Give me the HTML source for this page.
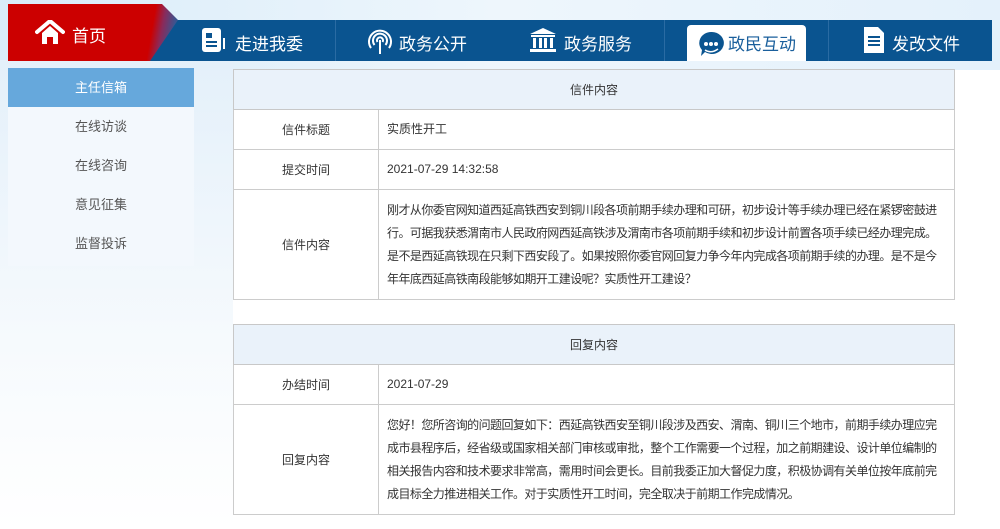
<!DOCTYPE html>
<html><head><meta charset="utf-8"><style>
*{margin:0;padding:0;box-sizing:border-box}
body{width:1000px;height:529px;overflow:hidden;background:#fff;font-family:"Liberation Sans","Noto Sans CJK SC",sans-serif;position:relative}
.topbg{position:absolute;left:0;top:0;width:1000px;height:70px;background:linear-gradient(90deg,#d9ecf9,#eef6fc 50%,#e4f1fb)}
.leftbg{position:absolute;left:0;top:60px;width:233px;height:469px;background:linear-gradient(180deg,#e4f0fa,#f6fafd 60%,#fff)}
.nav{position:absolute;left:8px;top:20px;width:984px;height:41px;background:#0a5490}
.home{position:absolute;left:8px;top:4px;width:170px;height:57px;background:linear-gradient(100deg,#cc0000 0,#cc0000 146px,#8a2a5a 156px,#3a5590 168px);clip-path:polygon(0 0,154px 0,170px 16px,142px 57px,0 57px)}
.nt{position:absolute;color:#fff;font-size:17px;top:30px}
.div{position:absolute;top:20px;width:1px;height:41px;background:#2a6ba3}
.act{position:absolute;left:687px;top:25px;width:119px;height:36px;background:#fff;border-radius:4px 4px 0 0}
.side{position:absolute;left:8px;top:68px;width:186px;height:198px;background:#f3f8fd}
.si{height:39px;line-height:39px;text-align:center;font-size:13px;color:#555}
.si.a{background:#66a8dc;color:#fff}
table{position:absolute;left:233px;width:722px;border-collapse:collapse;font-size:12px;color:#333;table-layout:fixed}
td{border:1px solid #ccc;vertical-align:middle}
td.h{height:40px;background:#eaf2fa;text-align:center;color:#333;border-color:#c8c8c8}
td.l{text-align:center;height:40px}
td.v{padding:0 8px;line-height:23px}
td.t{white-space:nowrap;letter-spacing:-0.55px}
</style></head><body>
<div class="topbg"></div>
<div class="leftbg"></div>
<div class="nav"></div>
<div class="home"></div>
<svg style="position:absolute;left:35px;top:20px" width="30" height="25" viewBox="0 0 30 25"><path d="M2 12 L15 1 L28 12" stroke="#fff" stroke-width="4" fill="none" stroke-linejoin="round" stroke-linecap="round"/><path d="M7 13 V24 H12 V17 H18 V24 H23 V13 L15 6 Z" fill="#fff"/></svg>
<div class="nt" style="left:72px;top:22px">首页</div>
<div class="div" style="left:335px"></div><div class="div" style="left:664px"></div><div class="div" style="left:828px"></div>
<svg style="position:absolute;left:202px;top:28px" width="24" height="25" viewBox="0 0 24 25"><rect x="0" y="0" width="19" height="24" rx="3" fill="#fff"/><rect x="4" y="5" width="6" height="5" fill="#0a5490"/><rect x="4" y="13" width="11" height="2" fill="#0a5490"/><rect x="4" y="17" width="11" height="2" fill="#0a5490"/><rect x="21" y="10" width="2" height="11" fill="#fff"/></svg>
<div class="nt" style="left:235px">走进我委</div>
<svg style="position:absolute;left:366px;top:28px" width="28" height="26" viewBox="0 0 28 26"><g fill="none" stroke="#fff" stroke-width="2"><path d="M5 20 A11 11 0 1 1 23 20"/><path d="M8.5 17 A7 7 0 1 1 19.5 17"/><path d="M11.5 14 A3 3 0 1 1 16.5 14"/></g><rect x="13" y="12" width="2" height="14" fill="#fff"/></svg>
<div class="nt" style="left:399px">政务公开</div>
<svg style="position:absolute;left:530px;top:28px" width="26" height="25" viewBox="0 0 26 25"><path d="M13 0 L26 6 H0 Z" fill="#fff"/><rect x="1" y="7" width="24" height="2" fill="#fff"/><rect x="3" y="10" width="3" height="10" fill="#fff"/><rect x="9" y="10" width="3" height="10" fill="#fff"/><rect x="14" y="10" width="3" height="10" fill="#fff"/><rect x="20" y="10" width="3" height="10" fill="#fff"/><rect x="0" y="21" width="26" height="3" fill="#fff"/></svg>
<div class="nt" style="left:564px">政务服务</div>
<div class="act"></div>
<svg style="position:absolute;left:698px;top:31px" width="26" height="26" viewBox="0 0 26 26"><path d="M13 1 A12 11 0 1 1 7 21 L3 25 L4 19 A12 11 0 0 1 13 1Z" fill="#0a5490"/><circle cx="8" cy="13" r="2" fill="#fff"/><circle cx="13" cy="13" r="2" fill="#fff"/><circle cx="18" cy="13" r="2" fill="#fff"/><path d="M7 19 Q13 23 20 18" stroke="#fff" stroke-width="1.5" fill="none"/></svg>
<div class="nt" style="left:728px;color:#1a5f9c">政民互动</div>
<svg style="position:absolute;left:864px;top:27px" width="20" height="26" viewBox="0 0 20 26"><path d="M0 0 H14 L20 6 V26 H0 Z" fill="#fff"/><rect x="4" y="9" width="12" height="2" fill="#0a5490"/><rect x="4" y="13" width="12" height="2" fill="#0a5490"/><rect x="4" y="17" width="12" height="2" fill="#0a5490"/></svg>
<div class="nt" style="left:892px">发改文件</div>
<div class="side">
<div class="si a">主任信箱</div><div class="si">在线访谈</div><div class="si">在线咨询</div><div class="si">意见征集</div><div class="si">监督投诉</div>
</div>
<table style="top:69px"><colgroup><col style="width:145px"><col></colgroup>
<tr><td class="h" colspan="2">信件内容</td></tr>
<tr><td class="l">信件标题</td><td class="v">实质性开工</td></tr>
<tr><td class="l">提交时间</td><td class="v">2021-07-29 14:32:58</td></tr>
<tr><td class="l" style="height:110px">信件内容</td><td class="v t">刚才从你委官网知道西延高铁西安到铜川段各项前期手续办理和可研，初步设计等手续办理已经在紧锣密鼓进<br>行。可据我获悉渭南市人民政府网西延高铁涉及渭南市各项前期手续和初步设计前置各项手续已经办理完成。<br>是不是西延高铁现在只剩下西安段了。如果按照你委官网回复力争今年内完成各项前期手续的办理。是不是今<br>年年底西延高铁南段能够如期开工建设呢？实质性开工建设？</td></tr>
</table>
<table style="top:324px"><colgroup><col style="width:145px"><col></colgroup>
<tr><td class="h" colspan="2">回复内容</td></tr>
<tr><td class="l">办结时间</td><td class="v">2021-07-29</td></tr>
<tr><td class="l" style="height:110px">回复内容</td><td class="v t">您好！您所咨询的问题回复如下：西延高铁西安至铜川段涉及西安、渭南、铜川三个地市，前期手续办理应完<br>成市县程序后，经省级或国家相关部门审核或审批，整个工作需要一个过程，加之前期建设、设计单位编制的<br>相关报告内容和技术要求非常高，需用时间会更长。目前我委正加大督促力度，积极协调有关单位按年底前完<br>成目标全力推进相关工作。对于实质性开工时间，完全取决于前期工作完成情况。</td></tr>
</table>
</body></html>
